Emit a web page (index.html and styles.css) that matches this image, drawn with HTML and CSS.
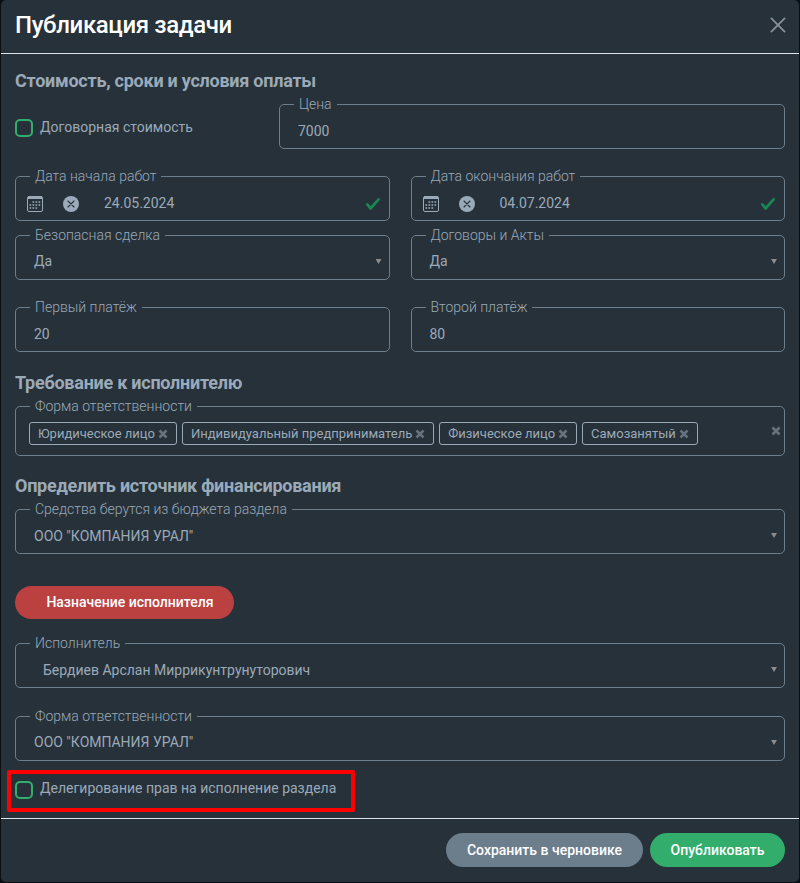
FILE: index.html
```html
<!DOCTYPE html>
<html lang="ru">
<head>
<meta charset="utf-8">
<title>Публикация задачи</title>
<link rel="stylesheet" href="styles.css">
</head>
<body>
<svg class="sprite" aria-hidden="true">
  <symbol id="calendar" viewBox="0 0 16 16">
    <path d="M2 .5h12A1.500 1.500 0 0 1 15.500 2v12a1.500 1.500 0 0 1-1.500 1.500H2A1.500 1.500 0 0 1 .5 14V2A1.500 1.500 0 0 1 2 .5z" fill="none" stroke="currentColor"/>
    <path d="M1 0h14v3H1z" fill="currentColor"/>
    <path d="M5.500 6h8M2.500 9h11M2.500 12h8" stroke="currentColor" stroke-width="1.700" stroke-dasharray="1.700 1.300" fill="none"/>
  </symbol>
  <symbol id="clear" viewBox="0 0 16 16">
    <circle cx="8" cy="8" r="8" fill="currentColor"/>
    <path d="M5 5l6 6M11 5l-6 6" stroke="#27313a" stroke-width="1.100" stroke-linecap="round"/>
  </symbol>
  <symbol id="check" viewBox="0 0 8 8">
    <path fill="#198754" d="M2.300 6.730.6 4.530c-.4-1.040.46-1.400 1.100-.8l1.100 1.400 3.400-3.800c.6-.63 1.600-.27 1.200.7l-4 4.600c-.43.500-.8.400-1.100.1z"/>
  </symbol>
  <symbol id="close" viewBox="0 0 16 16">
    <path d="M1.400 1.400l13.200 13.200M14.600 1.400L1.400 14.600" stroke="#8b9095" stroke-width="1.800" stroke-linecap="round"/>
  </symbol>
  <symbol id="remove" viewBox="0 0 10 10">
    <path d="M1.500 1.500l7 7M8.500 1.500l-7 7" stroke="#66737e" stroke-width="2.500"/>
  </symbol>
</svg>
<div class="modal">
  <header class="header">
    <h1>Публикация задачи</h1>
    <svg class="close"><use href="#close"/></svg>
  </header>
  <main class="body">
    <h2>Стоимость, сроки и условия оплаты</h2>
    <div class="price-row">
      <label class="check"><i class="box"></i><span>Договорная стоимость</span></label>
      <div class="field price"><span class="label">Цена</span><span class="value">7000</span></div>
    </div>
    <div class="pair dates">
      <div class="field date"><span class="label">Дата начала работ</span><svg class="icon"><use href="#calendar"/></svg><svg class="icon"><use href="#clear"/></svg><span class="day">24.05.2024</span><svg class="valid"><use href="#check"/></svg></div>
      <div class="field date"><span class="label">Дата окончания работ</span><svg class="icon"><use href="#calendar"/></svg><svg class="icon"><use href="#clear"/></svg><span class="day">04.07.2024</span><svg class="valid"><use href="#check"/></svg></div>
    </div>
    <div class="pair deal">
      <div class="field select"><span class="label">Безопасная сделка</span><span class="value">Да</span><i class="arrow"></i></div>
      <div class="field select"><span class="label">Договоры и Акты</span><span class="value">Да</span><i class="arrow"></i></div>
    </div>
    <div class="pair payments">
      <div class="field"><span class="label">Первый платёж</span><span class="value">20</span></div>
      <div class="field"><span class="label">Второй платёж</span><span class="value">80</span></div>
    </div>
    <h2 class="next">Требование к исполнителю</h2>
    <div class="field tags">
      <span class="label">Форма ответственности</span>
      <span class="tag">Юридическое лицо<svg class="remove"><use href="#remove"/></svg></span>
      <span class="tag">Индивидуальный предприниматель<svg class="remove"><use href="#remove"/></svg></span>
      <span class="tag">Физическое лицо<svg class="remove"><use href="#remove"/></svg></span>
      <span class="tag">Самозанятый<svg class="remove"><use href="#remove"/></svg></span>
      <svg class="remove all"><use href="#remove"/></svg>
    </div>
    <h2 class="next source">Определить источник финансирования</h2>
    <div class="field select budget"><span class="label">Средства берутся из бюджета раздела</span><span class="value">ООО "КОМПАНИЯ УРАЛ"</span><i class="arrow"></i></div>
    <button class="btn assign">Назначение исполнителя</button>
    <div class="field select person"><span class="label">Исполнитель</span><span class="value">Бердиев Арслан Миррикунтрунуторович</span><i class="arrow"></i></div>
    <div class="field select form"><span class="label">Форма ответственности</span><span class="value">ООО "КОМПАНИЯ УРАЛ"</span><i class="arrow"></i></div>
    <div class="highlight">
      <label class="check"><i class="box"></i><span>Делегирование прав на исполнение раздела</span></label>
    </div>
  </main>
  <footer class="footer">
    <button class="btn draft">Сохранить в черновике</button>
    <button class="btn publish">Опубликовать</button>
  </footer>
</div>
</body>
</html>
```
FILE: styles.css
```css
* { box-sizing: border-box; }

body {
  margin: 0;
  padding: 0 1px 1px;
  height: 883px;
  overflow: hidden;
  background: #0c0f12;
  color: #9baab8;
  font: 14px/21px Roboto, sans-serif;
}

.sprite { display: none; }

.modal {
  height: 882px;
  display: flex;
  flex-direction: column;
  background: #27313a;
  border-radius: 5px;
}

.header {
  height: 54px;
  flex: none;
  padding: 0 13px 4px 14px;
  display: flex;
  align-items: center;
  justify-content: space-between;
  border-bottom: 1px solid #dee2e6;
}

h1 {
  margin: 0;
  font-size: 24px;
  line-height: 36px;
  font-weight: 500;
  letter-spacing: -0.37px;
  color: #fff;
}

.close { width: 16px; height: 16px; }

.body {
  height: 764px;
  flex: none;
  padding: 16px 14px 0;
}

h2 {
  margin: 0;
  font-size: 18px;
  line-height: 22px;
  font-weight: 700;
  letter-spacing: -0.25px;
}

.price-row {
  display: grid;
  grid-template-columns: 264px 506px;
  margin-top: 12px;
}

.check { display: flex; }

.price-row .check { padding-top: 13px; }

.box {
  width: 18px;
  height: 18px;
  margin: 2px 7px 0 0;
  border: 2px solid #32ad6b;
  border-radius: 5px;
}

.field {
  position: relative;
  height: 45px;
  display: flex;
  padding: 0 7px 0 18px;
  border: 1px solid #6c7d8c;
  border-radius: 5px;
}

.label {
  position: absolute;
  left: 14px;
  top: -11px;
  padding: 0 5px;
  background: #27313a;
  font-weight: 300;
  white-space: nowrap;
}

.value { padding-top: 16px; }

.select .value { padding-top: 15px; }

.pair {
  display: grid;
  grid-template-columns: 1fr 1fr;
  column-gap: 21px;
}

.dates { margin-top: 27px; }
.deal { margin-top: 14px; }
.payments { margin-top: 27px; }

.date {
  padding: 10px 8px 0 11px;
  align-items: center;
}

.icon { width: 16px; height: 16px; margin-right: 20px; }

.day { margin: -1px auto 0 5px; }

.valid { width: 16px; height: 16px; }

.arrow {
  margin: 23px 0 0 auto;
  width: 6px;
  height: 5px;
  background: #8c8c8c;
  clip-path: polygon(0 0, 100% 0, 50% 100%);
}

.next { margin-top: 20px; }

.tags {
  height: 50px;
  margin-top: 12px;
  padding: 15px 3px 0 13px;
  gap: 5px;
}

.tag {
  height: 23px;
  padding: 0 8px;
  display: flex;
  align-items: center;
  gap: 3px;
  border: 1px solid #9baab8;
  border-radius: 3px;
  font-size: 13px;
  letter-spacing: -0.01px;
  white-space: nowrap;
}

.remove { width: 10px; height: 10px; }

.all { margin: 4px 0 0 auto; }

.source { margin: 19px 0 12px; }

.budget .value { padding-top: 16px; }

.btn {
  border: 0;
  border-radius: 17px;
  height: 34px;
  padding: 0;
  color: #fff;
  font: 500 14px/21px Roboto, sans-serif;
}

.assign {
  display: block;
  width: 219px;
  height: 33px;
  margin: 32px 0 24px;
  padding-left: 11px;
  background: #bb4141;
}

.person .value { padding: 16px 0 0 9px; }

.form { margin-top: 28px; }

.highlight {
  width: 348px;
  height: 42px;
  margin: 9px 0 0 -8px;
  padding: 4px 0 0 4px;
  border: 4px solid #f00;
  border-radius: 2px;
}

.highlight .box { margin-top: 3px; }

.footer {
  flex: 1;
  display: flex;
  justify-content: flex-end;
  gap: 7px;
  padding: 14px 14px 0;
  border-top: 1px solid #dee2e6;
}

.draft { width: 197px; background: #6c7d8c; }

.publish { width: 135px; background: #32ad6b; }
```
